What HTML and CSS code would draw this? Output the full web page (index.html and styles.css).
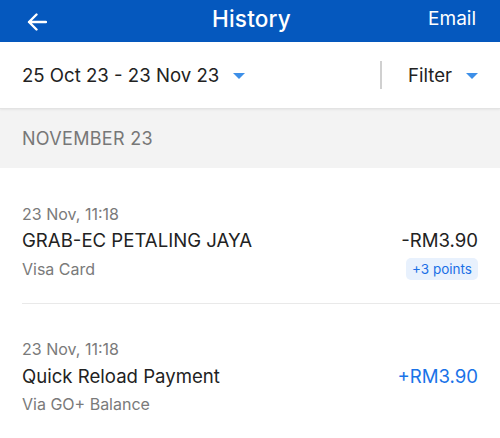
FILE: index.html
```html
<!DOCTYPE html>
<html>
<head>
<meta charset="utf-8">
<link rel="stylesheet" href="styles.css">
</head>
<body>
<div class="app">
  <header class="topbar">
    <span class="back">
      <svg width="20" height="18" viewBox="0 0 20 18"><path d="M19 9H2M9.5 1.5L2 9l7.5 7.5" fill="none" stroke="#fff" stroke-width="2.4" stroke-linecap="round" stroke-linejoin="round"/></svg>
    </span>
    <h1 class="title">History</h1>
    <span class="email">Email</span>
  </header>
  <div class="filters">
    <div class="range">25 Oct 23 - 23 Nov 23 <span class="caret"></span></div>
    <div class="divider"></div>
    <div class="filter">Filter <span class="caret"></span></div>
  </div>
  <div class="section">NOVEMBER 23</div>
  <div class="list">
    <div class="tx">
      <div class="tx-left">
        <div class="time">23 Nov, 11:18</div>
        <div class="name">GRAB-EC PETALING JAYA</div>
        <div class="sub">Visa Card</div>
      </div>
      <div class="tx-right">
        <div class="amount">-RM3.90</div>
        <div class="points">+3 points</div>
      </div>
    </div>
    <div class="tx">
      <div class="tx-left">
        <div class="time">23 Nov, 11:18</div>
        <div class="name">Quick Reload Payment</div>
        <div class="sub">Via GO+ Balance</div>
      </div>
      <div class="tx-right">
        <div class="amount credit">+RM3.90</div>
      </div>
    </div>
  </div>
</div>
</body>
</html>
```
FILE: styles.css
```css
* { box-sizing: border-box; margin: 0; padding: 0; }
html, body { width: 500px; height: 438px; overflow: hidden; background: #fff; }
body { font-family: Inter, "Noto Sans", "Liberation Sans", sans-serif; color: #222; }
.app { display: flex; flex-direction: column; }
.topbar {
  height: 42px; background: #0558be; color: #fff;
  display: grid; grid-template-columns: 1fr auto 1fr; align-items: center;
  padding: 0 24px 0 27px;
}
.back { display: flex; align-items: center; padding-top: 1px; }
.title { font-size: 22.5px; font-weight: 500; letter-spacing: 0.2px; text-align: center; margin-top: -6px; }
.email { justify-self: end; font-size: 19px; margin-top: -6px; }
.filters {
  height: 67px; display: flex; align-items: center; padding: 0 22px;
  border-bottom: 1px solid #e3e3e3; box-shadow: 0 1px 2px rgba(0,0,0,0.06);
  position: relative; z-index: 1;
}
.range { font-size: 18.6px; flex: 1; display: flex; align-items: center; color: #222; }
.filter { font-size: 18.6px; display: flex; align-items: center; color: #222; margin-left: 26px; }
.caret {
  display: inline-block; width: 0; height: 0; margin-left: 14px; margin-top: 2px;
  border-left: 6px solid transparent; border-right: 6px solid transparent; border-top: 6px solid #3d8fe8;
}
.divider { width: 2px; height: 28px; background: #d0d0d0; }
.section {
  height: 59px; background: #f3f3f3; color: #777; font-size: 18px;
  display: flex; align-items: center; padding: 0 22px; letter-spacing: 0.3px;
}
.list { padding-left: 22px; }
.tx {
  display: flex; justify-content: space-between; align-items: flex-start;
  padding: 35.5px 22px 0 0; height: 135px;
}
.tx + .tx { border-top: 1px solid #e9e9e9; height: auto; padding-top: 35px; }
.time { font-size: 16px; color: #7a7a7a; line-height: 20px; }
.name { font-size: 18.6px; color: #222; line-height: 22px; margin-top: 5.5px; }
.sub { font-size: 16px; color: #7a7a7a; line-height: 20px; margin-top: 7.5px; }
.tx-right { display: flex; flex-direction: column; align-items: flex-end; padding-top: 25.5px; }
.amount { font-size: 18.6px; color: #222; line-height: 22px; }
.amount.credit { color: #1a73e8; }
.points {
  margin-top: 7px; background: #e8f1fd; color: #1a6fe6; font-size: 13.5px;
  padding: 3px 6px; border-radius: 5px; line-height: 16px;
}
```
